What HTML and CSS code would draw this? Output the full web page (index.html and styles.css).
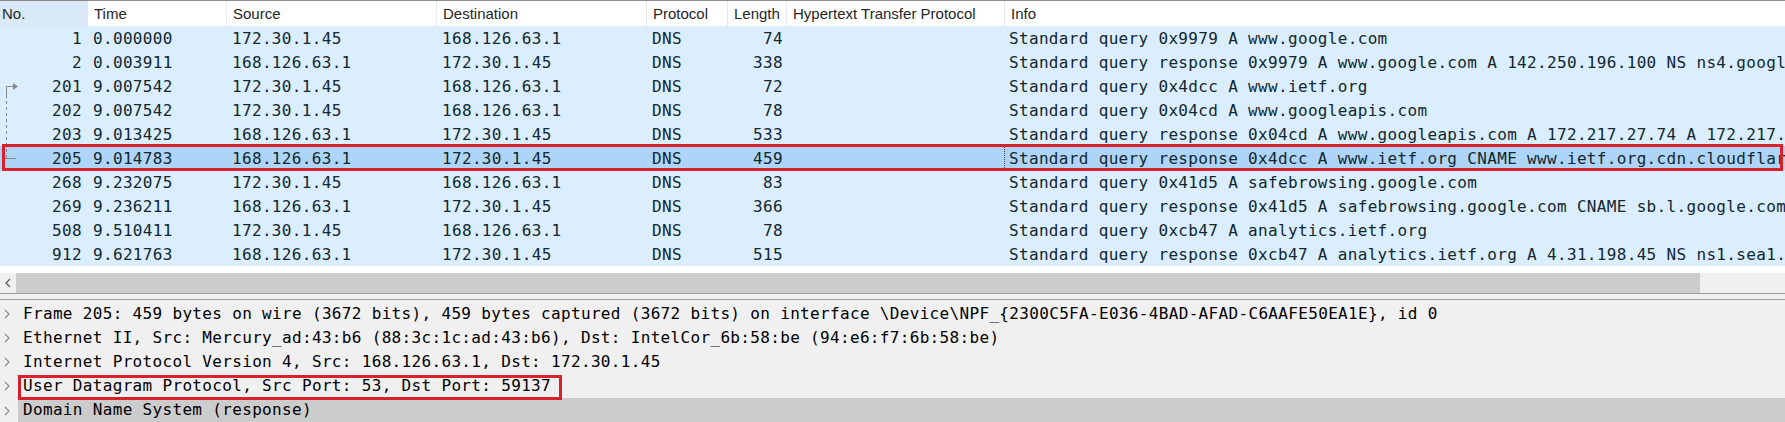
FILE: index.html
```html
<!DOCTYPE html>
<html>
<head>
<meta charset="utf-8">
<link rel="stylesheet" href="styles.css">
</head>
<body>
<div class="packet-list">
  <div class="plist-head">
    <div class="hcell no">No.</div>
    <div class="hcell">Time</div>
    <div class="hcell">Source</div>
    <div class="hcell">Destination</div>
    <div class="hcell">Protocol</div>
    <div class="hcell">Length</div>
    <div class="hcell">Hypertext Transfer Protocol</div>
    <div class="hcell">Info</div>
  </div>
  <div class="rows">
    <div class="row"><div class="cell no">1</div><div class="cell">0.000000</div><div class="cell">172.30.1.45</div><div class="cell">168.126.63.1</div><div class="cell">DNS</div><div class="cell len">74</div><div class="cell"></div><div class="cell info">Standard query 0x9979 A www.google.com</div></div>
    <div class="row"><div class="cell no">2</div><div class="cell">0.003911</div><div class="cell">168.126.63.1</div><div class="cell">172.30.1.45</div><div class="cell">DNS</div><div class="cell len">338</div><div class="cell"></div><div class="cell info">Standard query response 0x9979 A www.google.com A 142.250.196.100 NS ns4.google.com</div></div>
    <div class="row"><div class="cell no">201</div><div class="cell">9.007542</div><div class="cell">172.30.1.45</div><div class="cell">168.126.63.1</div><div class="cell">DNS</div><div class="cell len">72</div><div class="cell"></div><div class="cell info">Standard query 0x4dcc A www.ietf.org</div></div>
    <div class="row"><div class="cell no">202</div><div class="cell">9.007542</div><div class="cell">172.30.1.45</div><div class="cell">168.126.63.1</div><div class="cell">DNS</div><div class="cell len">78</div><div class="cell"></div><div class="cell info">Standard query 0x04cd A www.googleapis.com</div></div>
    <div class="row"><div class="cell no">203</div><div class="cell">9.013425</div><div class="cell">168.126.63.1</div><div class="cell">172.30.1.45</div><div class="cell">DNS</div><div class="cell len">533</div><div class="cell"></div><div class="cell info">Standard query response 0x04cd A www.googleapis.com A 172.217.27.74 A 172.217.25.106</div></div>
    <div class="row sel"><div class="cell no">205</div><div class="cell">9.014783</div><div class="cell">168.126.63.1</div><div class="cell">172.30.1.45</div><div class="cell">DNS</div><div class="cell len">459</div><div class="cell"></div><div class="cell info">Standard query response 0x4dcc A www.ietf.org CNAME www.ietf.org.cdn.cloudflare.net</div><div class="redbox row-mark"></div></div>
    <div class="row"><div class="cell no">268</div><div class="cell">9.232075</div><div class="cell">172.30.1.45</div><div class="cell">168.126.63.1</div><div class="cell">DNS</div><div class="cell len">83</div><div class="cell"></div><div class="cell info">Standard query 0x41d5 A safebrowsing.google.com</div></div>
    <div class="row"><div class="cell no">269</div><div class="cell">9.236211</div><div class="cell">168.126.63.1</div><div class="cell">172.30.1.45</div><div class="cell">DNS</div><div class="cell len">366</div><div class="cell"></div><div class="cell info">Standard query response 0x41d5 A safebrowsing.google.com CNAME sb.l.google.com</div></div>
    <div class="row"><div class="cell no">508</div><div class="cell">9.510411</div><div class="cell">172.30.1.45</div><div class="cell">168.126.63.1</div><div class="cell">DNS</div><div class="cell len">78</div><div class="cell"></div><div class="cell info">Standard query 0xcb47 A analytics.ietf.org</div></div>
    <div class="row"><div class="cell no">912</div><div class="cell">9.621763</div><div class="cell">168.126.63.1</div><div class="cell">172.30.1.45</div><div class="cell">DNS</div><div class="cell len">515</div><div class="cell"></div><div class="cell info">Standard query response 0xcb47 A analytics.ietf.org A 4.31.198.45 NS ns1.sea1.ietf.org</div></div>
    <svg class="related" width="20" height="96" viewBox="0 0 20 96">
      <line x1="6.5" y1="12" x2="6.5" y2="21" stroke="#8a8a8a" stroke-width="1"/>
      <line x1="6.5" y1="21" x2="6.5" y2="84" stroke="#8a8a8a" stroke-width="1" stroke-dasharray="3 3"/>
      <line x1="6" y1="12.5" x2="14" y2="12.5" stroke="#8a8a8a" stroke-width="1"/>
      <polygon points="13,9 18,12.5 13,16" fill="#8a8a8a"/>
      <line x1="2" y1="84.5" x2="16" y2="84.5" stroke="#8a8a8a" stroke-width="1"/>
    </svg>
  </div>
  <div class="hscroll">
    <div class="sarrow">
      <svg width="8" height="10" viewBox="0 0 8 10"><polyline points="6,1 2,5 6,9" fill="none" stroke="#606060" stroke-width="1.3"/></svg>
    </div>
    <div class="thumb"></div>
    <div class="track"></div>
  </div>
</div>
<div class="splitter"></div>
<div class="tree">
  <div class="trow"><div class="chev"><svg width="8" height="10" viewBox="0 0 8 10"><polyline points="2,1 6,5 2,9" fill="none" stroke="#8c8c8c" stroke-width="1.2"/></svg></div><div class="tlabel">Frame 205: 459 bytes on wire (3672 bits), 459 bytes captured (3672 bits) on interface \Device\NPF_{2300C5FA-E036-4BAD-AFAD-C6AAFE50EA1E}, id 0</div></div>
  <div class="trow"><div class="chev"><svg width="8" height="10" viewBox="0 0 8 10"><polyline points="2,1 6,5 2,9" fill="none" stroke="#8c8c8c" stroke-width="1.2"/></svg></div><div class="tlabel">Ethernet II, Src: Mercury_ad:43:b6 (88:3c:1c:ad:43:b6), Dst: IntelCor_6b:58:be (94:e6:f7:6b:58:be)</div></div>
  <div class="trow"><div class="chev"><svg width="8" height="10" viewBox="0 0 8 10"><polyline points="2,1 6,5 2,9" fill="none" stroke="#8c8c8c" stroke-width="1.2"/></svg></div><div class="tlabel">Internet Protocol Version 4, Src: 168.126.63.1, Dst: 172.30.1.45</div></div>
  <div class="trow marked"><div class="chev"><svg width="8" height="10" viewBox="0 0 8 10"><polyline points="2,1 6,5 2,9" fill="none" stroke="#8c8c8c" stroke-width="1.2"/></svg></div><div class="tlabel">User Datagram Protocol, Src Port: 53, Dst Port: 59137<div class="redbox tree-mark"></div></div></div>
  <div class="trow current"><div class="chev"><svg width="8" height="10" viewBox="0 0 8 10"><polyline points="2,1 6,5 2,9" fill="none" stroke="#8c8c8c" stroke-width="1.2"/></svg></div><div class="tlabel">Domain Name System (response)</div></div>
</div>
</body>
</html>
```
FILE: styles.css
```css
* {
  box-sizing: border-box;
  margin: 0;
  padding: 0;
}

html, body {
  width: 1785px;
  height: 422px;
  overflow: hidden;
}

body {
  background: #f0f0f0;
  font-family: "DejaVu Sans Mono", "Liberation Mono", monospace;
}

.packet-list {
  background: #ffffff;
  border-top: 1px solid #8c8c8c;
}

.plist-head,
.row {
  display: grid;
  grid-template-columns: 87px 139px 210px 210px 81px 59px 218px 1fr;
}

.plist-head {
  height: 25px;
  background: #ffffff;
  font-family: "Liberation Sans", Arial, sans-serif;
  font-size: 15px;
  color: #262626;
}

.hcell {
  display: flex;
  align-items: center;
  padding-left: 6px;
  border-left: 1px solid #e8e8e8;
  white-space: nowrap;
  overflow: hidden;
}

.hcell.no {
  background: #d9e9f8;
  padding-left: 2px;
  border-left: none;
}

.rows {
  position: relative;
}

.row {
  position: relative;
  height: 24px;
  line-height: 25px;
  background: #daeeff;
  color: #12272e;
  font-size: 16px;
  letter-spacing: 0.33px;
}

.cell {
  padding-left: 6px;
  white-space: nowrap;
  overflow: hidden;
}

.cell.no {
  text-align: right;
  padding-left: 0;
  padding-right: 5px;
}

.cell.len {
  text-align: right;
  padding-left: 0;
  padding-right: 3px;
}

.cell.info {
  padding-left: 5px;
}

.row.sel {
  background: #aed5f7;
}

.row.sel .cell.info {
  border-left: 1px dotted #4a4a4a;
  padding-left: 4px;
}

.redbox {
  position: absolute;
  z-index: 5;
  border: 3px solid #d8212b;
  pointer-events: none;
}

.row-mark {
  left: 2px;
  right: 2px;
  top: -2px;
  bottom: -1px;
}

.related {
  position: absolute;
  left: 0;
  top: 48px;
}

.hscroll {
  display: flex;
  height: 20px;
  margin-top: 7px;
  background: #f0f0f0;
}

.sarrow {
  width: 16px;
  display: flex;
  align-items: center;
  justify-content: center;
}

.thumb {
  width: 1684px;
  background: #cdcdcd;
}

.track {
  flex: 1;
  background: #f0f0f0;
}

.splitter {
  height: 7px;
  background: #f0f0f0;
  border-top: 1px solid #a0a0a0;
  border-bottom: 1px solid #a0a0a0;
}

.tree {
  background: #f0f0f0;
  color: #000000;
  font-size: 16px;
  letter-spacing: 0.33px;
  padding-top: 2px;
}

.trow {
  display: flex;
  height: 24px;
  line-height: 24px;
}

.chev {
  width: 18px;
  flex: none;
  display: flex;
  align-items: center;
  padding-left: 3px;
}

.tlabel {
  position: relative;
  flex: 1;
  padding-left: 5px;
  white-space: nowrap;
  overflow: visible;
}

.trow.current {
  height: 26px;
}

.trow.current .tlabel {
  background: #cccccc;
}

.tree-mark {
  left: 0;
  top: 1px;
  width: 544px;
  height: 25px;
}
```
